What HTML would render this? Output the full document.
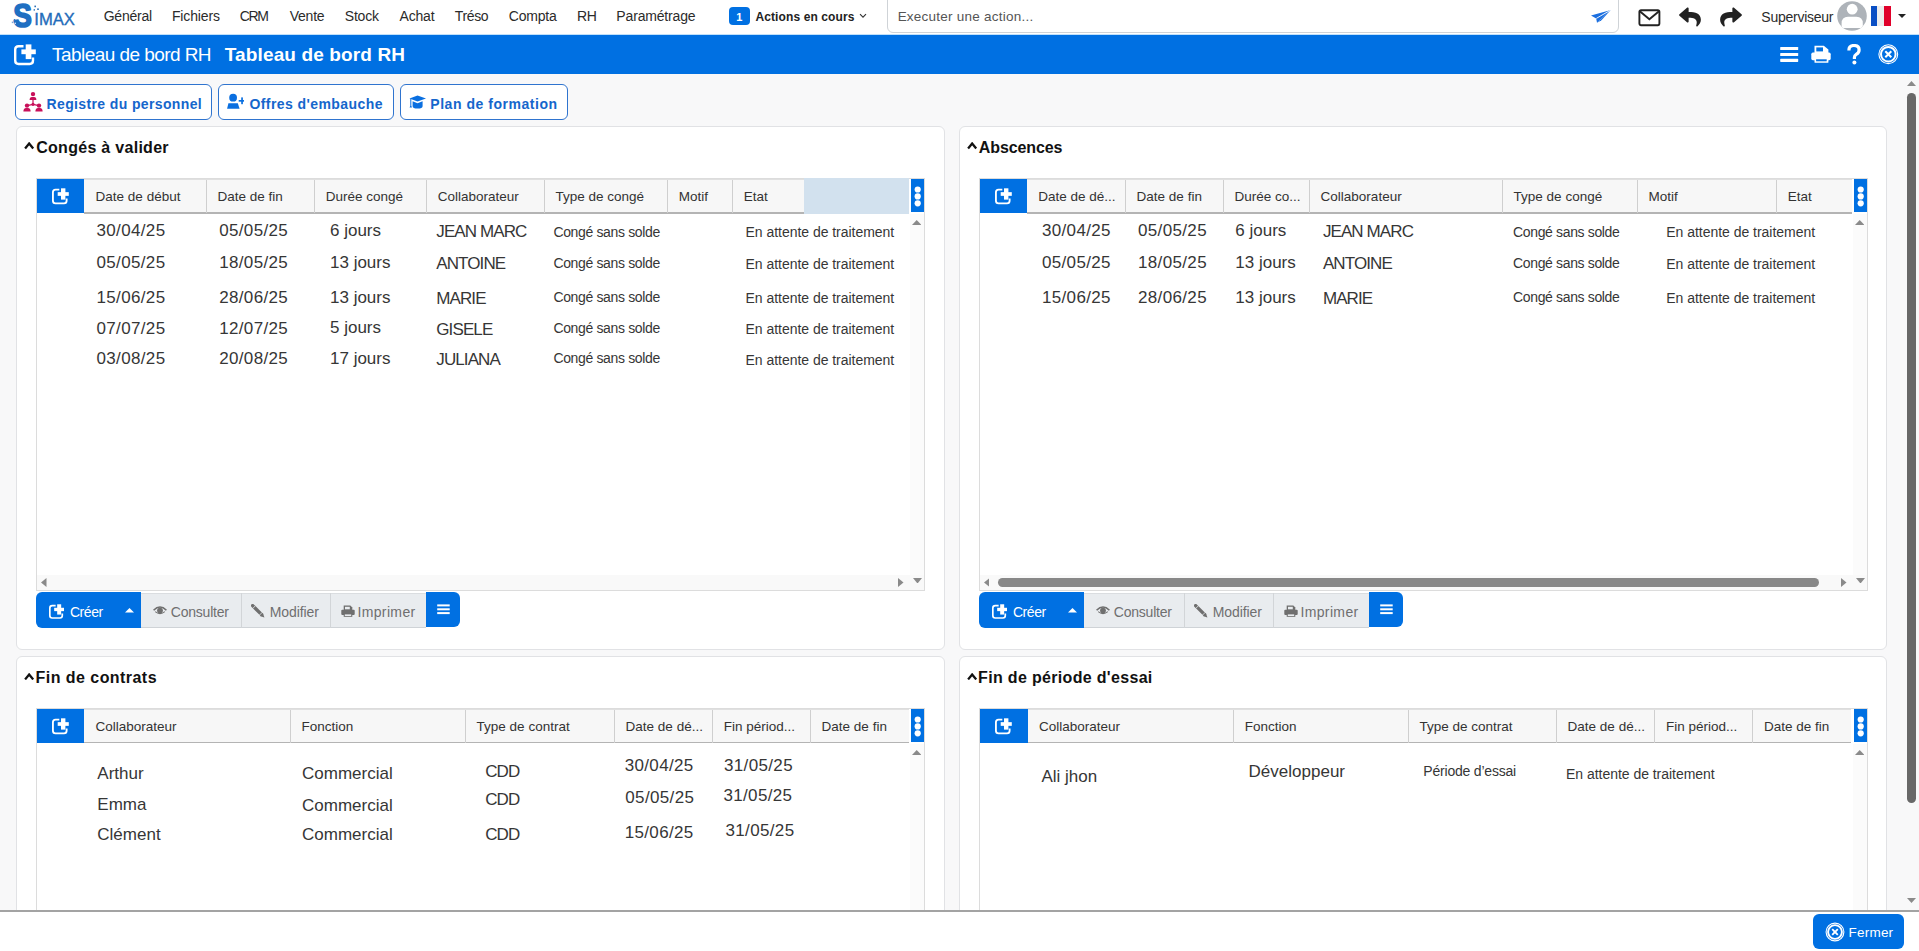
<!DOCTYPE html>
<html><head><meta charset="utf-8">
<style>
*{box-sizing:border-box;margin:0;padding:0}
html,body{width:1919px;height:951px;overflow:hidden;background:#f8f8f9;font-family:"Liberation Sans",sans-serif;color:#333}
.a{position:absolute;display:block}
.t{position:absolute;white-space:nowrap;line-height:1}
</style></head><body>

<div class="a" style="left:0px;top:0px;width:1919px;height:35px;background:#fff"></div>
<svg class="a" style="left:8px;top:0px" width="72" height="34" viewBox="0 0 72 34"><text x="0" y="0" font-family="Liberation Sans" font-weight="bold" font-size="31" fill="#1f6fc2" stroke="#1f6fc2" stroke-width="1.6" stroke-linejoin="round" transform="translate(5.2,27.3) scale(0.9,1.08)">S</text><text x="26.3" y="24.8" font-family="Liberation Sans" font-size="16.6" fill="#1f6cba" stroke="#1f6cba" stroke-width="0.35" textLength="40.6" lengthAdjust="spacingAndGlyphs">IMAX</text><rect x="26.4" y="5.6" width="1.6" height="1.6" fill="#2b6fb5"/><rect x="29.2" y="8.4" width="1.6" height="1.6" fill="#2b6fb5"/><rect x="25.6" y="9.2" width="1.4" height="1.4" fill="#2b6fb5"/><rect x="5.8" y="19" width="1.5" height="1.5" fill="#3b7fc5"/><rect x="3.8" y="21.6" width="1.5" height="1.5" fill="#7aa7d8"/><rect x="6.6" y="22.6" width="1.4" height="1.4" fill="#bfe0fb"/></svg>
<div class="t" style="left:103.70px;top:8.95px;font-size:14px;color:#2b2b2b;letter-spacing:-0.218px;">Général</div>
<div class="t" style="left:171.94px;top:8.95px;font-size:14px;color:#2b2b2b;letter-spacing:-0.151px;">Fichiers</div>
<div class="t" style="left:239.80px;top:8.95px;font-size:14px;color:#2b2b2b;letter-spacing:-1.365px;">CRM</div>
<div class="t" style="left:289.73px;top:8.95px;font-size:14px;color:#2b2b2b;letter-spacing:-0.235px;">Vente</div>
<div class="t" style="left:344.87px;top:8.95px;font-size:14px;color:#2b2b2b;letter-spacing:-0.243px;">Stock</div>
<div class="t" style="left:399.46px;top:8.95px;font-size:14px;color:#2b2b2b;letter-spacing:-0.166px;">Achat</div>
<div class="t" style="left:454.69px;top:8.95px;font-size:14px;color:#2b2b2b;letter-spacing:-0.343px;">Tréso</div>
<div class="t" style="left:508.80px;top:8.95px;font-size:14px;color:#2b2b2b;letter-spacing:-0.217px;">Compta</div>
<div class="t" style="left:577.10px;top:8.95px;font-size:14px;color:#2b2b2b;letter-spacing:-0.42px;">RH</div>
<div class="t" style="left:616.35px;top:8.95px;font-size:14px;color:#2b2b2b;letter-spacing:-0.167px;">Paramétrage</div>
<div class="a" style="left:729px;top:7px;width:21px;height:18px;background:#0070e2;border-radius:4px"></div>
<div class="t" style="left:736.20px;top:11.89px;font-size:11px;color:#fff;font-weight:bold;">1</div>
<div class="t" style="left:755.40px;top:10.64px;font-size:12px;color:#222;font-weight:bold;letter-spacing:0.115px;">Actions en cours</div>
<svg class="a" style="left:859px;top:13px;" width="8" height="6" viewBox="0 0 8 6"><path d="M1 1.2L4 4.2L7 1.2" fill="none" stroke="#333" stroke-width="1.1"/></svg>
<div class="a" style="left:887px;top:-6px;width:732px;height:39px;background:#fff;border:1px solid #cfd3d7;border-radius:6px"></div>
<div class="t" style="left:897.64px;top:10.37px;font-size:13.5px;color:#555;letter-spacing:0.243px;">Executer une action...</div>
<svg class="a" style="left:1590px;top:9px;" width="22" height="15" viewBox="0 0 22 15"><path d="M1 6.5L20.8 1L7 13.8L6.2 9.6Z" fill="#1b6fe0"/><path d="M6.2 9.6L20.8 1L10.5 11.6Z" fill="#fff" opacity="0.0"/><path d="M7 13.8L20.8 1L11.2 11.5Z" fill="#1b6fe0"/><path d="M6.3 9.4L20.8 1" stroke="#fff" stroke-width="0.9"/></svg>
<svg class="a" style="left:1638px;top:9px;" width="23" height="18" viewBox="0 0 23 18"><rect x="1.4" y="1.2" width="20" height="15" rx="1.6" fill="none" stroke="#222" stroke-width="1.9"/><path d="M1.8 2.2L11.4 10.3L21 2.2" fill="none" stroke="#222" stroke-width="1.9"/></svg>
<svg class="a" style="left:1679px;top:7px;" width="22" height="20" viewBox="0 20 512 470"><path fill="#222" d="M8.309 189.836L184.313 37.851C199.719 24.546 224 35.347 224 56.015v80.053c160.629 1.839 288 34.032 288 186.258 0 61.441-39.581 122.309-83.333 154.132-13.653 9.931-33.111-2.533-28.077-18.631 45.344-145.012-21.507-183.51-176.59-185.742V360c0 20.7-24.3 31.453-39.687 18.164l-176.004-152c-11.071-9.562-11.086-26.753 0-36.328z"/></svg>
<svg class="a" style="left:1720px;top:7px;" width="22" height="20" viewBox="0 20 512 470"><path fill="#222" d="M503.691 189.836L327.687 37.851C312.281 24.546 288 35.347 288 56.015v80.053C127.371 137.907 0 170.1 0 322.326c0 61.441 39.581 122.309 83.333 154.132 13.653 9.931 33.111-2.533 28.077-18.631C66.066 312.814 132.917 274.316 288 272.085V360c0 20.7 24.3 31.453 39.687 18.164l176.004-152c11.071-9.562 11.086-26.753 0-36.328z"/></svg>
<div class="t" style="left:1761.37px;top:9.95px;font-size:14px;color:#2b2b2b;letter-spacing:-0.255px;">Superviseur</div>
<svg class="a" style="left:1837px;top:1px;" width="30" height="30" viewBox="0 0 30 30"><defs><clipPath id="avc"><circle cx="15" cy="15" r="14.8"/></clipPath></defs><circle cx="15" cy="15" r="14.8" fill="#aeb3b9"/><g clip-path="url(#avc)"><circle cx="15.2" cy="8.2" r="5.4" fill="#fff"/><path d="M4.6 27V22.5Q4.6 15.8 11 15.8H19.4Q25.8 15.8 25.8 22.5V27Z" fill="#fff"/></g></svg>
<div class="a" style="left:1871px;top:6px;width:6px;height:20px;background:#0a4fc4"></div>
<div class="a" style="left:1877px;top:6px;width:7px;height:20px;background:#ececec"></div>
<div class="a" style="left:1884px;top:6px;width:7px;height:20px;background:#e0002a"></div>
<svg class="a" style="left:1897px;top:13px;" width="10" height="6" viewBox="0 0 10 6"><path d="M1 1H9L5 5Z" fill="#222"/></svg>
<div class="a" style="left:0px;top:34px;width:1919px;height:1px;background:#bfe0fb"></div>
<div class="a" style="left:0px;top:35px;width:1919px;height:39px;background:#0070e2"></div>
<svg class="a" style="left:13.5px;top:43.5px;" width="22.0" height="22.0" viewBox="0 0 22 22"><path d="M9.5 2.2H4.6Q1.2 2.2 1.2 5.6V16.6Q1.2 20 4.6 20H15.6Q19 20 19 16.6V13.6" fill="none" stroke="#fff" stroke-width="2.4"/><rect x="11.7" y="0.4" width="5.7" height="14.7" fill="#fff"/><rect x="7.4" y="5.4" width="14.4" height="4.8" fill="#fff"/></svg>
<div class="t" style="left:52.07px;top:45.22px;font-size:19px;color:#fff;letter-spacing:-0.559px;">Tableau de bord RH</div>
<div class="t" style="left:224.81px;top:45.22px;font-size:19px;color:#fff;font-weight:bold;letter-spacing:0.126px;">Tableau de bord RH</div>
<svg class="a" style="left:1780px;top:46px;" width="19" height="17" viewBox="0 0 19 17"><rect x="0.2" y="0.9" width="18" height="3.1" rx="0.6" fill="#fff"/><rect x="0.2" y="7" width="18" height="3" rx="0.6" fill="#fff"/><rect x="0.2" y="12.8" width="18" height="3.1" rx="0.6" fill="#fff"/></svg>
<svg class="a" style="left:1811px;top:45px;" width="20" height="18" viewBox="0 0 20 18"><path d="M3.5 0.7H12.8L17.4 4.6V8H3.5Z" fill="#fff"/><path d="M5.3 2.4H12V6.4H5.3Z" fill="#0070e2"/><rect x="0.3" y="7.6" width="19.4" height="7.6" rx="1.6" fill="#fff"/><rect x="3.5" y="13" width="13.9" height="4.8" rx="0.6" fill="#fff"/><rect x="5.1" y="14.3" width="10.6" height="2" fill="#0070e2"/></svg>
<svg class="a" style="left:1847px;top:44px;" width="14" height="21" viewBox="0 0 14 21"><path d="M1.9 6.4Q1.9 1.5 6.9 1.5Q12.1 1.5 12.1 5.9Q12.1 8.7 9.2 10.4Q7.4 11.5 7.4 13.6V15" fill="none" stroke="#fff" stroke-width="3.2"/><circle cx="7.4" cy="18.6" r="2" fill="#fff"/></svg>
<svg class="a" style="left:1878px;top:44px;" width="21" height="21" viewBox="0 0 21 21"><circle cx="10.3" cy="10.2" r="9.4" fill="none" stroke="#fff" stroke-width="1.1"/><circle cx="10.3" cy="10.2" r="7.3" fill="none" stroke="#fff" stroke-width="2"/><path d="M7.3 7.2L13.3 13.2M13.3 7.2L7.3 13.2" stroke="#fff" stroke-width="2"/></svg>
<div class="a" style="left:15px;top:84px;width:197px;height:36px;background:#fff;border:1.5px solid #2f74cf;border-radius:6px"></div>
<div class="a" style="left:218px;top:84px;width:176px;height:36px;background:#fff;border:1.5px solid #2f74cf;border-radius:6px"></div>
<div class="a" style="left:400px;top:84px;width:168px;height:36px;background:#fff;border:1.5px solid #2f74cf;border-radius:6px"></div>
<svg class="a" style="left:22px;top:91px;" width="22" height="22" viewBox="0 0 22 22"><g fill="#c8105a"><circle cx="11" cy="3.1" r="2.2"/><path d="M7.6 8.9Q7.6 5.9 10 5.9H12Q14.4 5.9 14.4 8.9Z"/><rect x="10.4" y="8.5" width="1.2" height="5"/><circle cx="11" cy="13.3" r="1.6"/><path d="M5 14.6L11 13.3L17 14.6" stroke="#c8105a" stroke-width="1.2" fill="none"/><circle cx="5" cy="14.6" r="2.2"/><circle cx="17" cy="14.6" r="2.2"/><path d="M1.4 20.5Q1.4 17 4 17H6Q8.6 17 8.6 20.5Z"/><path d="M13.4 20.5Q13.4 17 16 17H18Q20.6 17 20.6 20.5Z"/></g></svg>
<div class="t" style="left:46.55px;top:97.05px;font-size:14px;color:#1566cc;font-weight:bold;letter-spacing:0.369px;">Registre du personnel</div>
<svg class="a" style="left:226px;top:92px;" width="18" height="18" viewBox="0 0 18 18"><g fill="#0a6fe0"><circle cx="7.1" cy="5.7" r="3.9"/><path d="M2.4 11.2H11.8L13.6 16.7H1.1Z"/><rect x="12.7" y="8" width="6.6" height="1.7"/><rect x="15.2" y="5.4" width="1.7" height="6.8"/></g></svg>
<div class="t" style="left:249.44px;top:97.05px;font-size:14px;color:#1566cc;font-weight:bold;letter-spacing:0.423px;">Offres d'embauche</div>
<svg class="a" style="left:409px;top:95px;" width="18" height="14" viewBox="0 0 18 14"><g fill="#0a6fe0"><path d="M0.5 3.5L8.5 0.6L17 3.5L8.5 6.6Z"/><path d="M3.6 6.3L8.5 8.2L13.6 6.3V11.2Q13.6 13.5 8.6 13.5Q3.6 13.5 3.6 11.2Z"/><path d="M1.3 3.8H2.3V10.8L3 12.4H0.6L1.3 10.8Z"/></g></svg>
<div class="t" style="left:430.31px;top:97.05px;font-size:14px;color:#1566cc;font-weight:bold;letter-spacing:0.535px;">Plan de formation</div>
<div class="a" style="left:16px;top:126px;width:929px;height:524px;background:#fff;border:1px solid #e1e2e5;border-radius:6px"></div>
<div class="a" style="left:959px;top:126px;width:928px;height:524px;background:#fff;border:1px solid #e1e2e5;border-radius:6px"></div>
<div class="a" style="left:16px;top:656px;width:929px;height:330px;background:#fff;border:1px solid #e1e2e5;border-radius:6px"></div>
<div class="a" style="left:959px;top:656px;width:928px;height:330px;background:#fff;border:1px solid #e1e2e5;border-radius:6px"></div>
<svg class="a" style="left:24.2px;top:142.4px;" width="11" height="7.5" viewBox="0 0 11 7.5"><path d="M1.1 6.4L5.15 1.5L9.2 6.4" fill="none" stroke="#111" stroke-width="2.3"/></svg>
<div class="t" style="left:36.16px;top:140.26px;font-size:16px;color:#111;font-weight:bold;letter-spacing:0.293px;">Congés à valider</div>
<svg class="a" style="left:966.6px;top:142.4px;" width="11" height="7.5" viewBox="0 0 11 7.5"><path d="M1.1 6.4L5.15 1.5L9.2 6.4" fill="none" stroke="#111" stroke-width="2.3"/></svg>
<div class="t" style="left:978.80px;top:140.26px;font-size:16px;color:#111;font-weight:bold;letter-spacing:-0.105px;">Abscences</div>
<svg class="a" style="left:24.1px;top:672.5px;" width="11" height="7.5" viewBox="0 0 11 7.5"><path d="M1.1 6.4L5.15 1.5L9.2 6.4" fill="none" stroke="#111" stroke-width="2.3"/></svg>
<div class="t" style="left:35.62px;top:670.36px;font-size:16px;color:#111;font-weight:bold;letter-spacing:0.446px;">Fin de contrats</div>
<svg class="a" style="left:966.6px;top:672.5px;" width="11" height="7.5" viewBox="0 0 11 7.5"><path d="M1.1 6.4L5.15 1.5L9.2 6.4" fill="none" stroke="#111" stroke-width="2.3"/></svg>
<div class="t" style="left:978.12px;top:670.36px;font-size:16px;color:#111;font-weight:bold;letter-spacing:0.324px;">Fin de période d'essai</div>
<div class="a" style="left:36px;top:178px;width:889px;height:412.5px;background:#fff;border:1px solid #dcdcdc"></div>
<div class="a" style="left:910px;top:214px;width:14px;height:375.5px;background:#fbfbfb"></div>
<div class="a" style="left:37px;top:574.5px;width:887px;height:15px;background:#f9f9f9"></div>
<div class="a" style="left:37px;top:179px;width:767px;height:34px;background:#f7f7f7;border-top:1px solid #e0e0e0"></div>
<div class="a" style="left:84.4px;top:212.4px;width:719.6px;height:1.4px;background:#b4b4b4"></div>
<div class="a" style="left:804px;top:178px;width:105px;height:35.5px;background:#d2e1ee"></div>
<div class="a" style="left:37px;top:179px;width:47.400000000000006px;height:34px;background:#0070e2"></div>
<svg class="a" style="left:52.2px;top:187.9px;" width="16.94" height="16.94" viewBox="0 0 22 22"><path d="M9.5 2.2H4.6Q1.2 2.2 1.2 5.6V16.6Q1.2 20 4.6 20H15.6Q19 20 19 16.6V13.6" fill="none" stroke="#fff" stroke-width="2.4"/><rect x="11.7" y="0.4" width="5.7" height="14.7" fill="#fff"/><rect x="7.4" y="5.4" width="14.4" height="4.8" fill="#fff"/></svg>
<div class="a" style="left:205.8px;top:180px;width:1.3px;height:33px;background:#cfcfcf"></div>
<div class="a" style="left:314.0px;top:180px;width:1.3px;height:33px;background:#cfcfcf"></div>
<div class="a" style="left:426.1px;top:180px;width:1.3px;height:33px;background:#cfcfcf"></div>
<div class="a" style="left:543.7px;top:180px;width:1.3px;height:33px;background:#cfcfcf"></div>
<div class="a" style="left:667.1px;top:180px;width:1.3px;height:33px;background:#cfcfcf"></div>
<div class="a" style="left:732.0px;top:180px;width:1.3px;height:33px;background:#cfcfcf"></div>
<div class="t" style="left:95.60px;top:189.87px;font-size:13.5px;color:#333;">Date de début</div>
<div class="t" style="left:217.50px;top:189.87px;font-size:13.5px;color:#333;">Date de fin</div>
<div class="t" style="left:325.70px;top:189.87px;font-size:13.5px;color:#333;">Durée congé</div>
<div class="t" style="left:437.80px;top:189.87px;font-size:13.5px;color:#333;">Collaborateur</div>
<div class="t" style="left:555.40px;top:189.87px;font-size:13.5px;color:#333;">Type de congé</div>
<div class="t" style="left:678.80px;top:189.87px;font-size:13.5px;color:#333;">Motif</div>
<div class="t" style="left:743.70px;top:189.87px;font-size:13.5px;color:#333;">Etat</div>
<div class="a" style="left:911px;top:179px;width:13px;height:33px;background:#0070e2"></div>
<svg class="a" style="left:911px;top:179px;" width="13" height="33" viewBox="0 0 13 33"><circle cx="6.7" cy="10.5" r="3.1" fill="#fff"/><circle cx="6.7" cy="17.4" r="3.1" fill="#fff"/><circle cx="6.7" cy="24.3" r="3.1" fill="#fff"/></svg>
<svg class="a" style="left:912.1px;top:220px;" width="9.4" height="5" viewBox="0 0 9.4 5"><path d="M0 5L4.7 0L9.4 5Z" fill="#8a8a8a"/></svg>
<svg class="a" style="left:41px;top:577.5px;" width="5.5" height="9" viewBox="0 0 5.5 9"><path d="M5.5 0L0 4.5L5.5 9Z" fill="#8a8a8a"/></svg>
<svg class="a" style="left:898px;top:577.5px;" width="5.5" height="9" viewBox="0 0 5.5 9"><path d="M0 0L5.5 4.5L0 9Z" fill="#8a8a8a"/></svg>
<svg class="a" style="left:912.5px;top:577.5px;" width="9" height="5.5" viewBox="0 0 9 5.5"><path d="M0 0L4.5 5.5L9 0Z" fill="#8a8a8a"/></svg>
<div class="t" style="left:96.50px;top:222.21px;font-size:17px;color:#363636;letter-spacing:0.35px;">30/04/25</div>
<div class="t" style="left:219.20px;top:222.21px;font-size:17px;color:#363636;letter-spacing:0.35px;">05/05/25</div>
<div class="t" style="left:330.00px;top:222.21px;font-size:17px;color:#363636;letter-spacing:0px;">6 jours</div>
<div class="t" style="left:436.30px;top:223.11px;font-size:17px;color:#363636;letter-spacing:-0.9px;">JEAN MARC</div>
<div class="t" style="left:553.40px;top:224.95px;font-size:14px;color:#363636;letter-spacing:-0.35px;">Congé sans solde</div>
<div class="t" style="left:745.50px;top:224.95px;font-size:14px;color:#363636;letter-spacing:-0.03px;">En attente de traitement</div>
<div class="t" style="left:96.50px;top:253.81px;font-size:17px;color:#363636;letter-spacing:0.35px;">05/05/25</div>
<div class="t" style="left:219.20px;top:253.81px;font-size:17px;color:#363636;letter-spacing:0.35px;">18/05/25</div>
<div class="t" style="left:330.00px;top:253.81px;font-size:17px;color:#363636;letter-spacing:0px;">13 jours</div>
<div class="t" style="left:436.30px;top:255.11px;font-size:17px;color:#363636;letter-spacing:-0.9px;">ANTOINE</div>
<div class="t" style="left:553.40px;top:256.25px;font-size:14px;color:#363636;letter-spacing:-0.35px;">Congé sans solde</div>
<div class="t" style="left:745.50px;top:256.85px;font-size:14px;color:#363636;letter-spacing:-0.03px;">En attente de traitement</div>
<div class="t" style="left:96.50px;top:288.61px;font-size:17px;color:#363636;letter-spacing:0.35px;">15/06/25</div>
<div class="t" style="left:219.20px;top:288.61px;font-size:17px;color:#363636;letter-spacing:0.35px;">28/06/25</div>
<div class="t" style="left:330.00px;top:288.61px;font-size:17px;color:#363636;letter-spacing:0px;">13 jours</div>
<div class="t" style="left:436.30px;top:289.81px;font-size:17px;color:#363636;letter-spacing:-0.9px;">MARIE</div>
<div class="t" style="left:553.40px;top:290.45px;font-size:14px;color:#363636;letter-spacing:-0.35px;">Congé sans solde</div>
<div class="t" style="left:745.50px;top:291.25px;font-size:14px;color:#363636;letter-spacing:-0.03px;">En attente de traitement</div>
<div class="t" style="left:96.50px;top:319.71px;font-size:17px;color:#363636;letter-spacing:0.35px;">07/07/25</div>
<div class="t" style="left:219.20px;top:319.71px;font-size:17px;color:#363636;letter-spacing:0.35px;">12/07/25</div>
<div class="t" style="left:330.00px;top:318.61px;font-size:17px;color:#363636;letter-spacing:0px;">5 jours</div>
<div class="t" style="left:436.30px;top:320.51px;font-size:17px;color:#363636;letter-spacing:-0.9px;">GISELE</div>
<div class="t" style="left:553.40px;top:321.35px;font-size:14px;color:#363636;letter-spacing:-0.35px;">Congé sans solde</div>
<div class="t" style="left:745.50px;top:322.45px;font-size:14px;color:#363636;letter-spacing:-0.03px;">En attente de traitement</div>
<div class="t" style="left:96.50px;top:349.71px;font-size:17px;color:#363636;letter-spacing:0.35px;">03/08/25</div>
<div class="t" style="left:219.20px;top:349.71px;font-size:17px;color:#363636;letter-spacing:0.35px;">20/08/25</div>
<div class="t" style="left:330.00px;top:349.71px;font-size:17px;color:#363636;letter-spacing:0px;">17 jours</div>
<div class="t" style="left:436.30px;top:350.91px;font-size:17px;color:#363636;letter-spacing:-0.9px;">JULIANA</div>
<div class="t" style="left:553.40px;top:351.45px;font-size:14px;color:#363636;letter-spacing:-0.35px;">Congé sans solde</div>
<div class="t" style="left:745.50px;top:352.55px;font-size:14px;color:#363636;letter-spacing:-0.03px;">En attente de traitement</div>
<div class="a" style="left:36.25px;top:592px;width:104.5px;height:36px;background:#0070e2;border-radius:6px 0 0 6px"></div>
<svg class="a" style="left:48.75px;top:603.5px;" width="15.4" height="15.4" viewBox="0 0 22 22"><path d="M9.5 2.2H4.6Q1.2 2.2 1.2 5.6V16.6Q1.2 20 4.6 20H15.6Q19 20 19 16.6V13.6" fill="none" stroke="#fff" stroke-width="2.4"/><rect x="11.7" y="0.4" width="5.7" height="14.7" fill="#fff"/><rect x="7.4" y="5.4" width="14.4" height="4.8" fill="#fff"/></svg>
<div class="t" style="left:69.90px;top:605.15px;font-size:14px;color:#fff;letter-spacing:-0.422px;">Créer</div>
<svg class="a" style="left:124.75px;top:608px;" width="9" height="5" viewBox="0 0 9 5"><path d="M0 4.5L4.5 0L9 4.5Z" fill="#fff"/></svg>
<div class="a" style="left:140.75px;top:592.5px;width:285.5px;height:35.5px;background:#e9ecef;border-top:1px solid #dadde0;border-bottom:1px solid #cfd3d7"></div>
<div class="a" style="left:240.75px;top:593px;width:1px;height:35px;background:#d2d5d8"></div>
<div class="a" style="left:330.45px;top:593px;width:1px;height:35px;background:#d2d5d8"></div>
<svg class="a" style="left:153.15px;top:606.4px;" width="14" height="9" viewBox="0 0 14 9"><path d="M0.6 4.3Q7 -2.2 13.4 4.3" fill="none" stroke="#6f6f6f" stroke-width="1.6"/><path d="M2.2 5.6Q7 9.6 11.8 5.6" fill="none" stroke="#6f6f6f" stroke-width="1.1"/><circle cx="7" cy="4.6" r="2.9" fill="#6f6f6f"/></svg>
<div class="t" style="left:170.80px;top:605.15px;font-size:14px;color:#6f6f6f;letter-spacing:-0.22px;">Consulter</div>
<svg class="a" style="left:251.25px;top:604px;" width="15" height="15" viewBox="0 0 15 15"><path d="M1.6 1.6L10.4 10.4" stroke="#6f6f6f" stroke-width="3.4" stroke-linecap="round"/><path d="M8.9 11.9L11.9 8.9L13.4 13.4Z" fill="#6f6f6f"/><path d="M1.6 4.6L4.6 1.6M8.4 11.2L11.2 8.4" stroke="#e9ecef" stroke-width="0.8"/></svg>
<div class="t" style="left:269.75px;top:605.15px;font-size:14px;color:#6f6f6f;letter-spacing:-0.084px;">Modifier</div>
<svg class="a" style="left:340.75px;top:604.5px;" width="14" height="12" viewBox="0 0 14 12"><path d="M2.7 0.5H9.3L11.3 2.5V5H2.7Z" fill="#6f6f6f"/><path d="M4 1.8H8.8V4.4H4Z" fill="#e9ecef"/><rect x="0.3" y="4.8" width="13.4" height="5.2" rx="1" fill="#6f6f6f"/><rect x="2.7" y="8.5" width="8.6" height="3.3" fill="#6f6f6f"/><rect x="3.8" y="9.4" width="6.4" height="1.6" fill="#e9ecef"/></svg>
<div class="t" style="left:357.45px;top:605.15px;font-size:14px;color:#6f6f6f;letter-spacing:0.361px;">Imprimer</div>
<div class="a" style="left:426.25px;top:592px;width:33.5px;height:35px;background:#0070e2;border-radius:0 6px 6px 0"></div>
<svg class="a" style="left:437.25px;top:604px;" width="13" height="11" viewBox="0 0 13 11"><rect x="0.2" y="0.4" width="12.5" height="2" fill="#fff"/><rect x="0.2" y="4.3" width="12.5" height="2" fill="#fff"/><rect x="0.2" y="8.1" width="12.5" height="2" fill="#fff"/></svg>
<div class="a" style="left:978.7px;top:178px;width:889.3px;height:412.5px;background:#fff;border:1px solid #dcdcdc"></div>
<div class="a" style="left:1853px;top:214px;width:14px;height:375.5px;background:#fbfbfb"></div>
<div class="a" style="left:979.7px;top:574.5px;width:887.3px;height:15px;background:#f9f9f9"></div>
<div class="a" style="left:979.7px;top:179px;width:872.3px;height:34px;background:#f7f7f7;border-top:1px solid #e0e0e0"></div>
<div class="a" style="left:1027px;top:212.4px;width:825px;height:1.4px;background:#b4b4b4"></div>
<div class="a" style="left:979.7px;top:179px;width:47.299999999999955px;height:34px;background:#0070e2"></div>
<svg class="a" style="left:994.9000000000001px;top:187.9px;" width="16.94" height="16.94" viewBox="0 0 22 22"><path d="M9.5 2.2H4.6Q1.2 2.2 1.2 5.6V16.6Q1.2 20 4.6 20H15.6Q19 20 19 16.6V13.6" fill="none" stroke="#fff" stroke-width="2.4"/><rect x="11.7" y="0.4" width="5.7" height="14.7" fill="#fff"/><rect x="7.4" y="5.4" width="14.4" height="4.8" fill="#fff"/></svg>
<div class="a" style="left:1124.9px;top:180px;width:1.3px;height:33px;background:#cfcfcf"></div>
<div class="a" style="left:1222.9px;top:180px;width:1.3px;height:33px;background:#cfcfcf"></div>
<div class="a" style="left:1308.9px;top:180px;width:1.3px;height:33px;background:#cfcfcf"></div>
<div class="a" style="left:1501.9px;top:180px;width:1.3px;height:33px;background:#cfcfcf"></div>
<div class="a" style="left:1636.8px;top:180px;width:1.3px;height:33px;background:#cfcfcf"></div>
<div class="a" style="left:1776.0px;top:180px;width:1.3px;height:33px;background:#cfcfcf"></div>
<div class="t" style="left:1038.20px;top:189.87px;font-size:13.5px;color:#333;">Date de dé...</div>
<div class="t" style="left:1136.60px;top:189.87px;font-size:13.5px;color:#333;">Date de fin</div>
<div class="t" style="left:1234.60px;top:189.87px;font-size:13.5px;color:#333;">Durée co...</div>
<div class="t" style="left:1320.60px;top:189.87px;font-size:13.5px;color:#333;">Collaborateur</div>
<div class="t" style="left:1513.60px;top:189.87px;font-size:13.5px;color:#333;">Type de congé</div>
<div class="t" style="left:1648.50px;top:189.87px;font-size:13.5px;color:#333;">Motif</div>
<div class="t" style="left:1787.70px;top:189.87px;font-size:13.5px;color:#333;">Etat</div>
<div class="a" style="left:1854px;top:179px;width:13px;height:33px;background:#0070e2"></div>
<svg class="a" style="left:1854px;top:179px;" width="13" height="33" viewBox="0 0 13 33"><circle cx="6.7" cy="10.5" r="3.1" fill="#fff"/><circle cx="6.7" cy="17.4" r="3.1" fill="#fff"/><circle cx="6.7" cy="24.3" r="3.1" fill="#fff"/></svg>
<svg class="a" style="left:1855.1px;top:220px;" width="9.4" height="5" viewBox="0 0 9.4 5"><path d="M0 5L4.7 0L9.4 5Z" fill="#8a8a8a"/></svg>
<svg class="a" style="left:983.7px;top:577.5px;" width="5.5" height="9" viewBox="0 0 5.5 9"><path d="M5.5 0L0 4.5L5.5 9Z" fill="#8a8a8a"/></svg>
<svg class="a" style="left:1841px;top:577.5px;" width="5.5" height="9" viewBox="0 0 5.5 9"><path d="M0 0L5.5 4.5L0 9Z" fill="#8a8a8a"/></svg>
<svg class="a" style="left:1855.5px;top:577.5px;" width="9" height="5.5" viewBox="0 0 9 5.5"><path d="M0 0L4.5 5.5L9 0Z" fill="#8a8a8a"/></svg>
<div class="a" style="left:997.5px;top:578.0px;width:821.0999999999999px;height:8.5px;background:#888;border-radius:5px"></div>
<div class="t" style="left:1041.90px;top:222.21px;font-size:17px;color:#363636;letter-spacing:0.35px;">30/04/25</div>
<div class="t" style="left:1138.00px;top:222.21px;font-size:17px;color:#363636;letter-spacing:0.35px;">05/05/25</div>
<div class="t" style="left:1235.30px;top:222.21px;font-size:17px;color:#363636;letter-spacing:0px;">6 jours</div>
<div class="t" style="left:1322.90px;top:223.11px;font-size:17px;color:#363636;letter-spacing:-0.9px;">JEAN MARC</div>
<div class="t" style="left:1513.00px;top:224.95px;font-size:14px;color:#363636;letter-spacing:-0.35px;">Congé sans solde</div>
<div class="t" style="left:1666.30px;top:224.95px;font-size:14px;color:#363636;letter-spacing:-0.03px;">En attente de traitement</div>
<div class="t" style="left:1041.90px;top:253.81px;font-size:17px;color:#363636;letter-spacing:0.35px;">05/05/25</div>
<div class="t" style="left:1138.00px;top:253.81px;font-size:17px;color:#363636;letter-spacing:0.35px;">18/05/25</div>
<div class="t" style="left:1235.30px;top:253.81px;font-size:17px;color:#363636;letter-spacing:0px;">13 jours</div>
<div class="t" style="left:1322.90px;top:255.11px;font-size:17px;color:#363636;letter-spacing:-0.9px;">ANTOINE</div>
<div class="t" style="left:1513.00px;top:256.25px;font-size:14px;color:#363636;letter-spacing:-0.35px;">Congé sans solde</div>
<div class="t" style="left:1666.30px;top:256.85px;font-size:14px;color:#363636;letter-spacing:-0.03px;">En attente de traitement</div>
<div class="t" style="left:1041.90px;top:288.61px;font-size:17px;color:#363636;letter-spacing:0.35px;">15/06/25</div>
<div class="t" style="left:1138.00px;top:288.61px;font-size:17px;color:#363636;letter-spacing:0.35px;">28/06/25</div>
<div class="t" style="left:1235.30px;top:288.61px;font-size:17px;color:#363636;letter-spacing:0px;">13 jours</div>
<div class="t" style="left:1322.90px;top:289.81px;font-size:17px;color:#363636;letter-spacing:-0.9px;">MARIE</div>
<div class="t" style="left:1513.00px;top:290.45px;font-size:14px;color:#363636;letter-spacing:-0.35px;">Congé sans solde</div>
<div class="t" style="left:1666.30px;top:291.25px;font-size:14px;color:#363636;letter-spacing:-0.03px;">En attente de traitement</div>
<div class="a" style="left:979.25px;top:592px;width:104.5px;height:36px;background:#0070e2;border-radius:6px 0 0 6px"></div>
<svg class="a" style="left:991.75px;top:603.5px;" width="15.4" height="15.4" viewBox="0 0 22 22"><path d="M9.5 2.2H4.6Q1.2 2.2 1.2 5.6V16.6Q1.2 20 4.6 20H15.6Q19 20 19 16.6V13.6" fill="none" stroke="#fff" stroke-width="2.4"/><rect x="11.7" y="0.4" width="5.7" height="14.7" fill="#fff"/><rect x="7.4" y="5.4" width="14.4" height="4.8" fill="#fff"/></svg>
<div class="t" style="left:1012.90px;top:605.15px;font-size:14px;color:#fff;letter-spacing:-0.423px;">Créer</div>
<svg class="a" style="left:1067.75px;top:608px;" width="9" height="5" viewBox="0 0 9 5"><path d="M0 4.5L4.5 0L9 4.5Z" fill="#fff"/></svg>
<div class="a" style="left:1083.75px;top:592.5px;width:285.5px;height:35.5px;background:#e9ecef;border-top:1px solid #dadde0;border-bottom:1px solid #cfd3d7"></div>
<div class="a" style="left:1183.75px;top:593px;width:1px;height:35px;background:#d2d5d8"></div>
<div class="a" style="left:1273.45px;top:593px;width:1px;height:35px;background:#d2d5d8"></div>
<svg class="a" style="left:1096.15px;top:606.4px;" width="14" height="9" viewBox="0 0 14 9"><path d="M0.6 4.3Q7 -2.2 13.4 4.3" fill="none" stroke="#6f6f6f" stroke-width="1.6"/><path d="M2.2 5.6Q7 9.6 11.8 5.6" fill="none" stroke="#6f6f6f" stroke-width="1.1"/><circle cx="7" cy="4.6" r="2.9" fill="#6f6f6f"/></svg>
<div class="t" style="left:1113.80px;top:605.15px;font-size:14px;color:#6f6f6f;letter-spacing:-0.22px;">Consulter</div>
<svg class="a" style="left:1194.25px;top:604px;" width="15" height="15" viewBox="0 0 15 15"><path d="M1.6 1.6L10.4 10.4" stroke="#6f6f6f" stroke-width="3.4" stroke-linecap="round"/><path d="M8.9 11.9L11.9 8.9L13.4 13.4Z" fill="#6f6f6f"/><path d="M1.6 4.6L4.6 1.6M8.4 11.2L11.2 8.4" stroke="#e9ecef" stroke-width="0.8"/></svg>
<div class="t" style="left:1212.75px;top:605.15px;font-size:14px;color:#6f6f6f;letter-spacing:-0.084px;">Modifier</div>
<svg class="a" style="left:1283.75px;top:604.5px;" width="14" height="12" viewBox="0 0 14 12"><path d="M2.7 0.5H9.3L11.3 2.5V5H2.7Z" fill="#6f6f6f"/><path d="M4 1.8H8.8V4.4H4Z" fill="#e9ecef"/><rect x="0.3" y="4.8" width="13.4" height="5.2" rx="1" fill="#6f6f6f"/><rect x="2.7" y="8.5" width="8.6" height="3.3" fill="#6f6f6f"/><rect x="3.8" y="9.4" width="6.4" height="1.6" fill="#e9ecef"/></svg>
<div class="t" style="left:1300.45px;top:605.15px;font-size:14px;color:#6f6f6f;letter-spacing:0.361px;">Imprimer</div>
<div class="a" style="left:1369.25px;top:592px;width:33.5px;height:35px;background:#0070e2;border-radius:0 6px 6px 0"></div>
<svg class="a" style="left:1380.25px;top:604px;" width="13" height="11" viewBox="0 0 13 11"><rect x="0.2" y="0.4" width="12.5" height="2" fill="#fff"/><rect x="0.2" y="4.3" width="12.5" height="2" fill="#fff"/><rect x="0.2" y="8.1" width="12.5" height="2" fill="#fff"/></svg>
<div class="a" style="left:36px;top:707.7px;width:889px;height:292.29999999999995px;background:#fff;border:1px solid #dcdcdc"></div>
<div class="a" style="left:910px;top:743.7px;width:14px;height:255.29999999999995px;background:#fbfbfb"></div>
<div class="a" style="left:37px;top:708.7px;width:871.7px;height:34px;background:#f7f7f7;border-top:1px solid #e0e0e0"></div>
<div class="a" style="left:84.3px;top:742.1px;width:824.4000000000001px;height:1.4px;background:#b4b4b4"></div>
<div class="a" style="left:37px;top:708.7px;width:47.3px;height:34px;background:#0070e2"></div>
<svg class="a" style="left:52.2px;top:717.6px;" width="16.94" height="16.94" viewBox="0 0 22 22"><path d="M9.5 2.2H4.6Q1.2 2.2 1.2 5.6V16.6Q1.2 20 4.6 20H15.6Q19 20 19 16.6V13.6" fill="none" stroke="#fff" stroke-width="2.4"/><rect x="11.7" y="0.4" width="5.7" height="14.7" fill="#fff"/><rect x="7.4" y="5.4" width="14.4" height="4.8" fill="#fff"/></svg>
<div class="a" style="left:289.9px;top:709.7px;width:1.3px;height:33px;background:#cfcfcf"></div>
<div class="a" style="left:464.9px;top:709.7px;width:1.3px;height:33px;background:#cfcfcf"></div>
<div class="a" style="left:613.9px;top:709.7px;width:1.3px;height:33px;background:#cfcfcf"></div>
<div class="a" style="left:712.0px;top:709.7px;width:1.3px;height:33px;background:#cfcfcf"></div>
<div class="a" style="left:809.9px;top:709.7px;width:1.3px;height:33px;background:#cfcfcf"></div>
<div class="t" style="left:95.50px;top:719.57px;font-size:13.5px;color:#333;">Collaborateur</div>
<div class="t" style="left:301.60px;top:719.57px;font-size:13.5px;color:#333;">Fonction</div>
<div class="t" style="left:476.60px;top:719.57px;font-size:13.5px;color:#333;">Type de contrat</div>
<div class="t" style="left:625.60px;top:719.57px;font-size:13.5px;color:#333;">Date de dé...</div>
<div class="t" style="left:723.70px;top:719.57px;font-size:13.5px;color:#333;">Fin périod...</div>
<div class="t" style="left:821.60px;top:719.57px;font-size:13.5px;color:#333;">Date de fin</div>
<div class="a" style="left:911px;top:708.7px;width:13px;height:33px;background:#0070e2"></div>
<svg class="a" style="left:911px;top:708.7px;" width="13" height="33" viewBox="0 0 13 33"><circle cx="6.7" cy="10.5" r="3.1" fill="#fff"/><circle cx="6.7" cy="17.4" r="3.1" fill="#fff"/><circle cx="6.7" cy="24.3" r="3.1" fill="#fff"/></svg>
<svg class="a" style="left:912.1px;top:749.7px;" width="9.4" height="5" viewBox="0 0 9.4 5"><path d="M0 5L4.7 0L9.4 5Z" fill="#8a8a8a"/></svg>
<div class="t" style="left:97.30px;top:765.31px;font-size:17px;color:#363636;letter-spacing:0px;">Arthur</div>
<div class="t" style="left:302.00px;top:765.31px;font-size:17px;color:#363636;letter-spacing:0px;">Commercial</div>
<div class="t" style="left:485.20px;top:762.51px;font-size:17px;color:#363636;letter-spacing:-0.9px;">CDD</div>
<div class="t" style="left:624.70px;top:756.51px;font-size:17px;color:#363636;letter-spacing:0.35px;">30/04/25</div>
<div class="t" style="left:724.00px;top:756.51px;font-size:17px;color:#363636;letter-spacing:0.35px;">31/05/25</div>
<div class="t" style="left:97.30px;top:796.11px;font-size:17px;color:#363636;letter-spacing:0px;">Emma</div>
<div class="t" style="left:302.00px;top:796.81px;font-size:17px;color:#363636;letter-spacing:0px;">Commercial</div>
<div class="t" style="left:485.20px;top:791.41px;font-size:17px;color:#363636;letter-spacing:-0.9px;">CDD</div>
<div class="t" style="left:625.30px;top:788.61px;font-size:17px;color:#363636;letter-spacing:0.35px;">05/05/25</div>
<div class="t" style="left:723.40px;top:787.21px;font-size:17px;color:#363636;letter-spacing:0.35px;">31/05/25</div>
<div class="t" style="left:97.30px;top:826.21px;font-size:17px;color:#363636;letter-spacing:0px;">Clément</div>
<div class="t" style="left:302.00px;top:826.21px;font-size:17px;color:#363636;letter-spacing:0px;">Commercial</div>
<div class="t" style="left:485.20px;top:825.71px;font-size:17px;color:#363636;letter-spacing:-0.9px;">CDD</div>
<div class="t" style="left:624.70px;top:823.71px;font-size:17px;color:#363636;letter-spacing:0.35px;">15/06/25</div>
<div class="t" style="left:725.50px;top:822.41px;font-size:17px;color:#363636;letter-spacing:0.35px;">31/05/25</div>
<div class="a" style="left:978.6px;top:707.7px;width:889.4px;height:292.29999999999995px;background:#fff;border:1px solid #dcdcdc"></div>
<div class="a" style="left:1853px;top:743.7px;width:14px;height:255.29999999999995px;background:#fbfbfb"></div>
<div class="a" style="left:979.6px;top:708.7px;width:871.9px;height:34px;background:#f7f7f7;border-top:1px solid #e0e0e0"></div>
<div class="a" style="left:1027.7px;top:742.1px;width:823.8px;height:1.4px;background:#b4b4b4"></div>
<div class="a" style="left:979.6px;top:708.7px;width:48.10000000000002px;height:34px;background:#0070e2"></div>
<svg class="a" style="left:994.8000000000001px;top:717.6px;" width="16.94" height="16.94" viewBox="0 0 22 22"><path d="M9.5 2.2H4.6Q1.2 2.2 1.2 5.6V16.6Q1.2 20 4.6 20H15.6Q19 20 19 16.6V13.6" fill="none" stroke="#fff" stroke-width="2.4"/><rect x="11.7" y="0.4" width="5.7" height="14.7" fill="#fff"/><rect x="7.4" y="5.4" width="14.4" height="4.8" fill="#fff"/></svg>
<div class="a" style="left:1233.0px;top:709.7px;width:1.3px;height:33px;background:#cfcfcf"></div>
<div class="a" style="left:1407.8px;top:709.7px;width:1.3px;height:33px;background:#cfcfcf"></div>
<div class="a" style="left:1555.9px;top:709.7px;width:1.3px;height:33px;background:#cfcfcf"></div>
<div class="a" style="left:1654.2px;top:709.7px;width:1.3px;height:33px;background:#cfcfcf"></div>
<div class="a" style="left:1752.2px;top:709.7px;width:1.3px;height:33px;background:#cfcfcf"></div>
<div class="t" style="left:1038.90px;top:719.57px;font-size:13.5px;color:#333;">Collaborateur</div>
<div class="t" style="left:1244.70px;top:719.57px;font-size:13.5px;color:#333;">Fonction</div>
<div class="t" style="left:1419.50px;top:719.57px;font-size:13.5px;color:#333;">Type de contrat</div>
<div class="t" style="left:1567.60px;top:719.57px;font-size:13.5px;color:#333;">Date de dé...</div>
<div class="t" style="left:1665.90px;top:719.57px;font-size:13.5px;color:#333;">Fin périod...</div>
<div class="t" style="left:1763.90px;top:719.57px;font-size:13.5px;color:#333;">Date de fin</div>
<div class="a" style="left:1854px;top:708.7px;width:13px;height:33px;background:#0070e2"></div>
<svg class="a" style="left:1854px;top:708.7px;" width="13" height="33" viewBox="0 0 13 33"><circle cx="6.7" cy="10.5" r="3.1" fill="#fff"/><circle cx="6.7" cy="17.4" r="3.1" fill="#fff"/><circle cx="6.7" cy="24.3" r="3.1" fill="#fff"/></svg>
<svg class="a" style="left:1855.1px;top:749.7px;" width="9.4" height="5" viewBox="0 0 9.4 5"><path d="M0 5L4.7 0L9.4 5Z" fill="#8a8a8a"/></svg>
<div class="t" style="left:1041.40px;top:767.61px;font-size:17px;color:#363636;">Ali jhon</div>
<div class="t" style="left:1248.60px;top:763.41px;font-size:17px;color:#363636;">Développeur</div>
<div class="t" style="left:1423.30px;top:763.75px;font-size:14px;color:#363636;letter-spacing:-0.2px;">Période d’essai</div>
<div class="t" style="left:1566.00px;top:767.35px;font-size:14px;color:#363636;letter-spacing:-0.03px;">En attente de traitement</div>
<div class="a" style="left:1903px;top:74px;width:16px;height:836px;background:#f8f8f9"></div>
<svg class="a" style="left:1907px;top:81px;" width="9" height="5" viewBox="0 0 9 5"><path d="M0 5L4.5 0L9 5Z" fill="#8a8a8a"/></svg>
<div class="a" style="left:1907px;top:93px;width:9px;height:710px;background:#686868;border-radius:5px"></div>
<svg class="a" style="left:1907px;top:898px;" width="9" height="5" viewBox="0 0 9 5"><path d="M0 0L4.5 5L9 0Z" fill="#8a8a8a"/></svg>
<div class="a" style="left:0px;top:910px;width:1919px;height:41px;background:#fff;border-top:2px solid #a3a3a3"></div>
<div class="a" style="left:1813px;top:914px;width:91px;height:35px;background:#0070e2;border-radius:6px"></div>
<svg class="a" style="left:1825px;top:922px;" width="20" height="20" viewBox="0 0 20 20"><circle cx="10" cy="10" r="8.9" fill="none" stroke="#fff" stroke-width="1.1"/><circle cx="10" cy="10" r="6.9" fill="none" stroke="#fff" stroke-width="1.9"/><path d="M7.2 7.2L12.8 12.8M12.8 7.2L7.2 12.8" stroke="#fff" stroke-width="1.9"/></svg>
<div class="t" style="left:1848.59px;top:926.27px;font-size:13.5px;color:#fff;letter-spacing:0.203px;">Fermer</div>
</body></html>
